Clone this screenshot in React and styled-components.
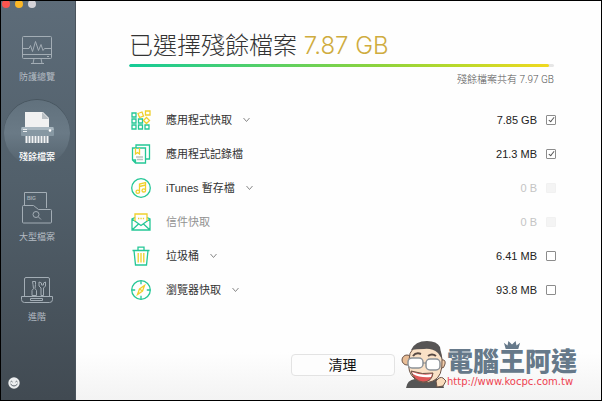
import React, { useState } from "react";
import styled, { createGlobalStyle, css } from "styled-components";

const Global = createGlobalStyle`
  *, *::before, *::after { box-sizing: border-box; }
  body { margin: 0; background: #fdfdfd; }
  body, button, input {
    font-family: "Liberation Sans", "Noto Sans CJK TC", sans-serif;
  }
`;

const Window = styled.div`
  display: grid;
  grid-template-columns: 75px 1fr;
  min-height: 100vh;
  position: relative;
  border: 1px solid #000;
  background: linear-gradient(#fefefe 88%, #f3f3f3);
`;

const Sidebar = styled.aside`
  display: flex;
  flex-direction: column;
  background: linear-gradient(#5d6c79, #52606b 45%, #414a52);
  border-right: 1px solid #4a545d;
`;

const TrafficLights = styled.div`
  display: flex;
  align-items: flex-end;
  gap: 5px;
  height: 7px;
  padding-left: 1px;
  overflow: hidden;
`;

const Light = styled.button`
  flex: none;
  width: 8px;
  height: 8px;
  padding: 0;
  border: 0;
  border-radius: 50%;
  background: ${(p) => p.$color};
`;

const Nav = styled.nav`
  display: flex;
  flex-direction: column;
  padding: 18px 2px 0 0;
`;

const NavItem = styled.a`
  position: relative;
  display: flex;
  flex-direction: column;
  align-items: center;
  height: 80px;
  padding-top: 4px;
  font-size: 9px;
  line-height: 14px;
  text-decoration: none;
  color: #b4bcc3;
  svg, span { position: relative; }
  ${(p) =>
    p.$active &&
    css`
      color: #fff;
      font-weight: 500;
      &::before {
        content: "";
        position: absolute;
        top: -6px;
        left: 50%;
        width: 66px;
        height: 66px;
        margin-left: -33px;
        border-radius: 50%;
        background: linear-gradient(#61717d, #6a7a86 50%, #5665710a);
        box-shadow: 0 -1px 0 #485660;
      }
    `}
`;

const NavIcon = styled.svg`
  width: 40px;
  height: 40px;
  fill: none;
  stroke: #a3adb5;
  stroke-width: 1;
`;

const Smile = styled.button`
  width: 12px;
  height: 12px;
  margin: auto 0 11px 7px;
  padding: 0;
  border: 0;
  background: none;
  svg { display: block; width: 12px; height: 12px; }
`;

const Main = styled.main`
  display: flex;
  flex-direction: column;
  padding: 27px 45px 24px 53px;
`;

const Header = styled.header`
  margin-right: 2px;
`;

const Title = styled.h1`
  margin: 0;
  font-size: 24px;
  line-height: 36px;
  font-weight: 300;
  font-family: Inter, "Noto Sans CJK TC", sans-serif;
  color: #333;
  white-space: nowrap;
`;

const Amount = styled.span`
  color: #cfac3e;
`;

const Meter = styled.div`
  height: 3px;
  border-radius: 2px;
  overflow: hidden;
  background: #e6e6e6;
`;

const MeterFill = styled.div`
  height: 100%;
  border-radius: 2px;
  background: linear-gradient(90deg, #14cb98, #8fd33c 60%, #b9d92b 78%, #f0d91f);
`;

const Total = styled.p`
  margin: 5px 0 0;
  text-align: right;
  font-size: 10px;
  line-height: 16px;
  color: #555;
  font-family: Roboto, "Noto Sans CJK TC", sans-serif;
  font-weight: 300;
`;

const List = styled.ul`
  display: flex;
  flex-direction: column;
  margin: 15px 0 0;
  padding: 0 0 0 2px;
  list-style: none;
`;

const Row = styled.li`
  display: flex;
  align-items: center;
  height: 34px;
  font-size: 11px;
  line-height: 16px;
`;

const RowIcon = styled.svg`
  flex: none;
  width: 20px;
  height: 20px;
  margin-right: 15px;
  fill: none;
  stroke: #24c796;
  stroke-width: 1.3;
  .y { stroke: #efd02c; }
`;

const RowLabel = styled.label`
  color: ${(p) => (p.$dim ? "#919191" : "#333")};
`;

const Expand = styled.button`
  display: flex;
  margin-left: 10px;
  padding: 0;
  border: 0;
  background: none;
  svg { width: 9px; height: 6px; fill: none; stroke: #888; stroke-width: 1; }
`;

const Size = styled.span`
  margin-left: auto;
  color: ${(p) => (p.$dim ? "#c4c4c4" : "#222")};
`;

const Check = styled.input`
  appearance: none;
  position: relative;
  flex: none;
  width: 10px;
  height: 10px;
  margin: 0 0 0 9px;
  border: 1px solid #8c8c8c;
  border-radius: 1px;
  background: #fff;
  &:disabled { border-color: #f1f1f1; background: #f4f4f4; }
  &:checked::after {
    content: "";
    position: absolute;
    left: 3px;
    top: 0;
    width: 3px;
    height: 6px;
    border: solid #555;
    border-width: 0 1px 1px 0;
    transform: rotate(38deg);
  }
`;

const CleanButton = styled.button`
  align-self: center;
  width: 104px;
  height: 22px;
  margin: auto 0 0;
  padding: 0;
  border: 1px solid #e3e3e3;
  border-radius: 4px;
  background: #fdfdfd;
  color: #111;
  font-size: 14px;
  line-height: 20px;
`;

const Watermark = styled.div`
  position: absolute;
  right: 24px;
  bottom: 11px;
  display: flex;
  align-items: flex-end;
`;

const Mascot = styled.svg`
  width: 46px;
  height: 48px;
  margin-bottom: 1px;
`;

const Brand = styled.div`
  position: relative;
  display: flex;
  flex-direction: column;
`;

const Crown = styled.svg`
  position: absolute;
  top: -10px;
  left: 56px;
  width: 18px;
  height: 9px;
  fill: #66798a;
`;

const BrandName = styled.strong`
  font-size: 26px;
  line-height: 24px;
  font-weight: 900;
  color: #66798a;
`;

const BrandLink = styled.a`
  font-family: "DejaVu Sans", sans-serif;
  font-size: 10px;
  line-height: 15px;
  color: #ee3f50;
  text-decoration: none;
`;

const nav = [
  {
    label: "防護總覽",
    icon: (
      <>
        <rect x="5.5" y="6.500" width="29" height="22" rx="1" />
        <path d="M5.500 24.500h29M17 28.500l-1 5M24 28.500l1 5M14 33.500h13M30 26.500h2M6 18.500h6l1.500-3 2 6 3-10 3 9 2.500-6 2 6 1.500-2h7" />
      </>
    ),
  },
  {
    label: "殘餘檔案",
    icon: (
      <g stroke="none">
        <path d="M8 2h18l6 6v13H8z" fill="#f1f1f1" />
        <path d="M25 2v7h7z" fill="#b9bfc3" />
        <rect x="4" y="17" width="33" height="9" rx="1" fill="#8798a3" />
        <path d="M5 17h31l1 3H4z" fill="#a9b7c0" />
        <path d="M6 19.500h4M6 21.500h4" stroke="#e9edef" />
        <circle cx="33" cy="20.500" r="1.300" fill="#fff" />
        <path d="M9.500 26v7M12.500 26v7M15.500 26v7M18.500 26v7M21.500 26v7M24.500 26v7M27.500 26v7M30.500 26v7" stroke="#f3f4f5" strokeWidth="2" />
      </g>
    ),
  },
  {
    label: "大型檔案",
    icon: (
      <>
        <path d="M7.500 16V2.500h22V18" />
        <path d="M5.500 32V16.500q0-1 1-1h10l5 4h12q1 0 1 1V32q0 1-1 1h-27q-1 0-1-1z" />
        <circle cx="19" cy="24.500" r="3" />
        <path d="M21.500 27l2.500 2.500" />
        <text x="10" y="10" fontSize="5" fontWeight="700" fill="#a3adb5" stroke="none">BIG</text>
      </>
    ),
  },
  {
    label: "進階",
    icon: (
      <>
        <path d="M7.500 26.500V9q0-1.500 1.500-1.500h22q1.500 0 1.500 1.500v17.500" />
        <path d="M4.500 26.500h31v3q0 3-3 3h-25q-3 0-3-3zM13.500 28.500h12v2h-12z" />
        <path d="M15.500 11.500h3v3l-.5 4 1.500 2v5h-4.500v-5l1.500-2-.5-4z" />
        <path d="M22 12v4l2 2v7.500h2.500V18l2-2v-4l-2 1v2h-2v-2z" />
      </>
    ),
  },
];

const rows = [
  {
    id: "apps", label: "應用程式快取", size: "7.85 GB", expand: true, checked: true,
    icon: (
      <>
        <path d="M1 3h4v4H1zM1 9h4v4H1zM1 15h4v4H1zM7.500 15h4v4h-4zM14 15h4v4h-4zM7.500 9h4v4h-4z" />
        <path className="y" d="M7 3.500l4-1.500 1.500 4-4 1.500zM14.500 1H19v4h-4.500zM15.500 7.500l3 3-3 3-3-3z" />
      </>
    ),
  },
  {
    id: "logs", label: "應用程式記錄檔", size: "21.3 MB", checked: true,
    icon: (
      <>
        <path d="M1.500 4h13v15h-10l-3-3zM5 4V1h13.500v14H14.500M1.500 16h3v3" />
        <path className="y" d="M4.500 4v6l2-1.500 2 1.500V4" />
        <path d="M5 13h7M6 15.500h6" stroke="#b9c4bf" />
      </>
    ),
  },
  {
    id: "itunes", label: "iTunes 暫存檔", size: "0 B", expand: true, disabled: true,
    icon: (
      <>
        <circle cx="10" cy="10" r="9.300" />
        <path className="y" d="M8.500 13.500V6l6-1.500V12M8.500 8.500l6-1.500" />
        <ellipse className="y" cx="6.800" cy="13.800" rx="1.800" ry="1.600" />
        <ellipse className="y" cx="12.800" cy="12.400" rx="1.800" ry="1.600" />
      </>
    ),
  },
  {
    id: "mail", label: "信件快取", size: "0 B", disabled: true, dim: true,
    icon: (
      <>
        <path d="M4 5.500L1 7v11h18V7l-3-1.500M1 7l9 6.500L19 7M1 18l6.500-6M19 18l-6.500-6" />
        <path className="y" d="M4 9V2h12v7M7 6.500h1.300M9.400 6.500h1.300M11.800 6.500h1.300" />
      </>
    ),
  },
  {
    id: "trash", label: "垃圾桶", size: "6.41 MB", expand: true,
    icon: (
      <>
        <path d="M1.500 4.500h17M3 4.500L4.500 19h11L17 4.500M7 4V1.200h6V4" />
        <path className="y" d="M7.200 7v9.500M10 7v9.500M12.800 7v9.500" />
      </>
    ),
  },
  {
    id: "browser", label: "瀏覽器快取", size: "93.8 MB", expand: true,
    icon: (
      <>
        <circle cx="10" cy="10" r="9.300" />
        <path d="M10 .8v3.400M10 15.800v3.400M.8 10h3.400M15.800 10h3.400" />
        <path className="y" d="M13.500 5.500l-2 5.500-5 3.500 2-5.500zM8.500 9l3 2" />
      </>
    ),
  },
];

function FileRow({ row }) {
  const [checked, setChecked] = useState(Boolean(row.checked));
  return (
    <Row>
      <RowIcon viewBox="0 0 20 20" aria-hidden="true">{row.icon}</RowIcon>
      <RowLabel htmlFor={row.id} $dim={row.dim}>{row.label}</RowLabel>
      {row.expand && (
        <Expand type="button" aria-label={row.label}>
          <svg viewBox="0 0 9 6"><path d="M1.500 1l3 3.500 3-3.500" /></svg>
        </Expand>
      )}
      <Size $dim={row.disabled}>{row.size}</Size>
      <Check
        type="checkbox"
        id={row.id}
        checked={checked}
        disabled={row.disabled}
        onChange={(e) => setChecked(e.target.checked)}
      />
    </Row>
  );
}

export default function App() {
  const fill = (7.87 / 7.97) * 100;
  return (
    <>
      <Global />
      <Window>
        <Sidebar>
          <TrafficLights>
            <Light type="button" aria-label="關閉" $color="#fb5550" />
            <Light type="button" aria-label="縮小" $color="#fcb827" />
            <Light type="button" aria-label="放大" $color="#d5d3d8" />
          </TrafficLights>
          <Nav>
            {nav.map((item, i) => (
              <NavItem key={item.label} href="#" $active={i === 1}>
                <NavIcon viewBox="0 0 40 40" aria-hidden="true">{item.icon}</NavIcon>
                <span>{item.label}</span>
              </NavItem>
            ))}
          </Nav>
          <Smile type="button" aria-label="意見">
            <svg viewBox="0 0 12 12" fill="none" stroke="#59626a">
              <circle cx="6" cy="6" r="5.700" fill="#eceeef" stroke="none" />
              <path d="M2.500 5q1-1.500 2 0M7.500 5q1-1.500 2 0M2.500 7q3.500 4 7 0" />
            </svg>
          </Smile>
        </Sidebar>
        <Main>
          <Header>
            <Title>已選擇殘餘檔案 <Amount>7.87 GB</Amount></Title>
            <Meter><MeterFill style={{ width: `${fill}%` }} /></Meter>
            <Total>殘餘檔案共有 7.97 GB</Total>
          </Header>
          <List>
            {rows.map((row) => <FileRow key={row.id} row={row} />)}
          </List>
          <CleanButton type="button">清理</CleanButton>
        </Main>
        <Watermark>
          <Mascot viewBox="0 0 46 48" aria-hidden="true">
            <path d="M5 48q1-8 9-9l20-1q8 2 9 10z" fill="#555" />
            <path d="M35 41q4-5 7-3l3 3-3 5-6 1z" fill="#f9dcbc" stroke="#6b5347" />
            <circle cx="6" cy="20" r="5" fill="#e8bd96" stroke="#6b5347" />
            <path d="M40 20q5-1 4 4-1 5-4 4z" fill="#f4cda7" stroke="#6b5347" />
            <path d="M8 20Q8 5 25 4q15 0 16 15 1 18-9 22-10 4-18-2Q6 33 8 20z" fill="#fae1c6" stroke="#6b5347" />
            <path d="M10 10Q14 1 26 1q10 0 13 6l2 12-4-6Q31 8 23 9q-8 0-13 1z" fill="#575555" />
            <path d="M12 16q3-4 8-2M27 16q4-3 8 0" fill="none" stroke="#574943" strokeWidth="2" />
            <rect x="7" y="18" width="15" height="10" rx="4" fill="#fff" stroke="#8c9298" strokeWidth="1.500" />
            <rect x="25" y="19" width="14" height="11" rx="4" fill="#fff" stroke="#8c9298" strokeWidth="1.500" />
            <path d="M22 23h3" stroke="#7c8288" />
            <path d="M10 31q12 4 22 2-1 9-10 9-9-1-12-11z" fill="#df5757" stroke="#6b5347" />
            <path d="M11 32q10 4 20 2l-1 3q-11 1-18-3z" fill="#fff" />
          </Mascot>
          <Brand>
            <Crown viewBox="0 0 20 10" aria-hidden="true">
              <path d="M3 10L1 3l4 3 1-5 4 4 4-4 1 5 4-3-2 7z" />
            </Crown>
            <BrandName>電腦王阿達</BrandName>
            <BrandLink href="#">http://www.kocpc.com.tw</BrandLink>
          </Brand>
        </Watermark>
      </Window>
    </>
  );
}
